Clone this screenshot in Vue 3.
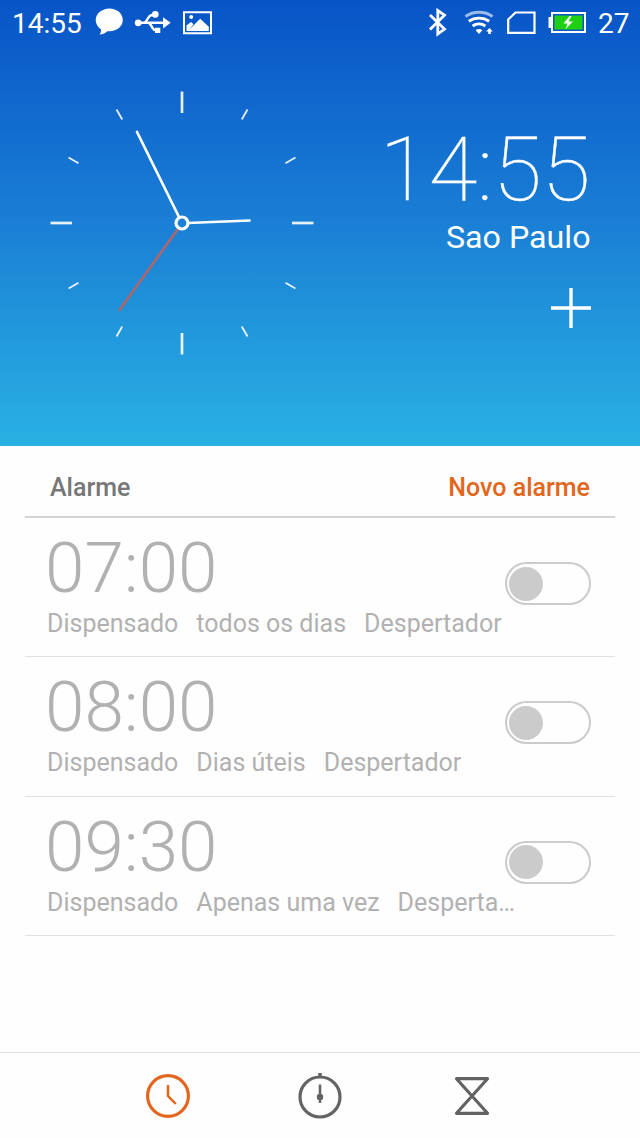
<template>
  <div class="screen">
    <header class="hero">
      <div class="status">
        <span class="status-text status-time">14:55</span>
        <svg class="status-notes" width="120" height="30" viewBox="94 8 120 30">
          <path
            d="M109.500 8.500c7.500 0 13.300 5.100 13.300 11.500s-5.800 11.200-13.300 11.200h-2.300c-1.600 1.900-4.200 3.200-7.700 3.400 1.200-1.400 1.700-3.200 1.500-5.200-3.200-2.200-5.300-5.500-5.300-9.400 0-6.400 6.300-11.500 13.800-11.500z"
            fill="#fff"
          />
          <g fill="none" stroke="#fff" stroke-width="2.400">
            <path d="M138 22.800h27M144 22.500c3.500 0 3.700-7.500 8-7.500h3M148 22.800c3.500 0 3.700 7.300 7.500 7.300h2.500" />
          </g>
          <g fill="#fff">
            <circle cx="138.200" cy="22.800" r="3.400" />
            <circle cx="155.300" cy="14.400" r="3.300" />
            <path d="M155 27.700h5.300v5.300H155zM163 17.200l7.700 5.600-7.700 5.600z" />
          </g>
          <path d="M184 12.200h27v21h-27z" fill="none" stroke="#fff" stroke-width="2" />
          <circle cx="191.200" cy="16.900" r="2" fill="#fff" />
          <path d="M186.500 31v-5.500l4.500-3.500 2.500 2.300-4 5.200 10.700-10.700 8.600 8v4.200z" fill="#fff" />
        </svg>
        <svg class="status-system" width="164" height="30" viewBox="426 8 164 30">
          <path d="M430 15l14.500 14-6.700 5V10.500l6.700 4.700L430 29.500" fill="none" stroke="#fff" stroke-width="2.800" />
          <g fill="none" stroke="#fff" stroke-width="2.900">
            <path d="M465.500 16.500c8-5.600 19-5.600 27 0" opacity="0.6" />
            <path d="M468.800 21.300c6-4.200 14.400-4.200 20.400 0" />
            <path d="M472.600 26c3.800-2.700 9-2.700 12.800 0" />
          </g>
          <path d="M475.600 30.200c2-1.700 4.800-1.700 6.800 0l-3.400 3.900z" fill="#fff" />
          <path d="M489.500 28l3.300 3.500h-2v2.600h-2.600v-2.600h-2.200z" fill="#fff" />
          <path d="M515.500 12.500h19v20.400h-26.300V19.500z" fill="none" stroke="#fff" stroke-width="2.200" />
          <path d="M552 13h33v19h-33z" fill="none" stroke="#fff" stroke-width="2" />
          <path d="M548.500 17h3v11h-3z" fill="#fff" />
          <path d="M554.500 15.500h28v14h-28z" fill="#1fd012" />
          <path d="M569.500 16l-6 7.500h4l-2 5.700 7.300-7.700h-4.300l3-5.500z" fill="#fff" />
        </svg>
        <span class="status-text battery">27</span>
      </div>

      <div class="clock-row">
        <svg class="dial" width="264" height="264" viewBox="-132 -132 264 264">
          <line
            v-for="n in 12"
            :key="n"
            :class="n % 3 ? 'tick' : 'tick major'"
            x1="0"
            x2="0"
            :y1="n % 3 ? -131 : -131.500"
            :y2="n % 3 ? -119.500 : -110"
            :transform="`rotate(${n * 30})`"
          />
          <line class="hand second" x1="-4" y1="6" x2="-62.500" y2="87" />
          <line class="hand" x1="-3" y1="-6" x2="-45" y2="-91" />
          <line class="hand" x1="6" y1="0" x2="67.500" y2="-2.500" />
          <circle class="hub" r="6" />
        </svg>
        <div class="world">
          <div class="world-time">14:55</div>
          <div class="world-city">Sao Paulo</div>
          <svg class="add" width="40" height="40" viewBox="0 0 40 40">
            <path d="M0 20h40M20 0v40" stroke="#fff" stroke-width="3.400" />
          </svg>
        </div>
      </div>
    </header>

    <main class="alarms">
      <div class="alarms-head">
        <span class="heading">Alarme</span>
        <span class="new-alarm">Novo alarme</span>
      </div>
      <div v-for="alarm in alarms" :key="alarm.time" class="alarm">
        <div class="alarm-time">{{ alarm.time }}</div>
        <div class="alarm-meta">
          <span>{{ alarm.state }}</span>
          <span>{{ alarm.repeat }}</span>
          <span class="label">{{ alarm.label }}</span>
        </div>
        <button class="toggle" :class="{ on: alarm.on }" @click="alarm.on = !alarm.on">
          <span class="knob"></span>
        </button>
      </div>
    </main>

    <nav class="tabs">
      <svg class="tab active" width="46" height="46" viewBox="-23 -23 46 46">
        <circle r="20.400" />
        <path d="M0-11V0l7.800 8" stroke-width="2.500" />
      </svg>
      <svg class="tab" width="46" height="48" viewBox="-23 -25 46 48">
        <circle r="20" />
        <path d="M0-24v5" stroke-width="3.500" />
        <path d="M0-12.500V6" stroke-width="2.500" />
        <circle class="dot" r="3.200" />
      </svg>
      <svg class="tab" width="46" height="46" viewBox="-23 -23 46 46">
        <path d="M-15.500-17.300h31L-15.500 17.300h31z" stroke-linejoin="round" />
      </svg>
    </nav>
  </div>
</template>

<script setup>
import { ref } from 'vue'

const alarms = ref([
  { time: '07:00', state: 'Dispensado', repeat: 'todos os dias', label: 'Despertador', on: false },
  { time: '08:00', state: 'Dispensado', repeat: 'Dias úteis', label: 'Despertador', on: false },
  { time: '09:30', state: 'Dispensado', repeat: 'Apenas uma vez', label: 'Despertador', on: false },
])
</script>

<style>
body {
  margin: 0;
  background: #fefefe;
}
</style>

<style scoped>
.screen {
  display: flex;
  flex-direction: column;
  width: 640px;
  height: 1138px;
  overflow: hidden;
  background: #fefefe;
  font-family: Roboto, "Noto Sans", sans-serif;
}

.hero {
  box-sizing: border-box;
  height: 446px;
  background: linear-gradient(#0854c7, #1a7fd5 50%, #29b1e3);
  color: #fff;
}
.status {
  display: flex;
  align-items: center;
  box-sizing: border-box;
  height: 46px;
  padding: 0 11px 0 12px;
}
.status-text {
  font-size: 28px;
  line-height: 46px;
  padding-top: 2px;
}
.status-time {
  width: 82px;
}
.status-system {
  margin-left: auto;
}
.battery {
  width: 31px;
  margin-left: 8px;
}

.clock-row {
  display: flex;
  justify-content: space-between;
  padding: 45px 49.500px 0;
}
.dial {
  display: block;
}
.tick {
  stroke: #fff;
  stroke-width: 1.800;
  opacity: 0.9;
}
.tick.major {
  stroke-width: 2.700;
}
.hand {
  stroke: #fff;
  stroke-width: 2.700;
  stroke-linecap: round;
}
.hand.second {
  stroke: #a9676f;
}
.hub {
  fill: none;
  stroke: #fff;
  stroke-width: 3.200;
}
.world {
  display: flex;
  flex-direction: column;
  align-items: flex-end;
}
.world-time {
  margin-top: 34px;
  font-size: 89px;
  font-weight: 100;
  line-height: 90px;
  white-space: nowrap;
  -webkit-text-stroke: 0.400px #fff;
}
.world-city {
  margin-top: 2px;
  font-size: 32.200px;
  line-height: 40px;
}
.add {
  margin-top: 31px;
}

.alarms {
  padding: 0 25px;
}
.alarms-head {
  display: flex;
  justify-content: space-between;
  box-sizing: border-box;
  height: 72px;
  padding: 7px 25px 0;
  border-bottom: 2px solid #d4d4d4;
  font-size: 25px;
  font-weight: 500;
  line-height: 70px;
}
.heading {
  color: #777;
}
.new-alarm {
  color: #e2661c;
}
.alarm {
  display: grid;
  grid-template-columns: 1fr 86px;
  grid-template-rows: 88px 50px;
  box-sizing: border-box;
  height: 139.300px;
  padding: 0 24.500px 0 22px;
  border-bottom: 1px solid #e2e2e2;
  color: #b1b1b1;
}
.alarm-time {
  grid-area: 1 / 1;
  height: 82px;
  margin-left: -2px;
  padding-top: 6px;
  font-size: 71px;
  font-weight: 300;
  line-height: 88px;
}
.alarm-meta {
  grid-area: 2 / 1 / 3 / 3;
  display: flex;
  gap: 18px;
  width: 472px;
  padding-top: 1px;
  font-size: 25px;
  line-height: 34px;
  white-space: nowrap;
}
.label {
  overflow: hidden;
  text-overflow: ellipsis;
}
.toggle {
  grid-area: 1 / 2 / 3 / 3;
  box-sizing: border-box;
  display: flex;
  align-items: center;
  width: 86px;
  height: 43px;
  margin-top: 44px;
  padding: 0 2px;
  border: 2px solid #cbcbcb;
  border-radius: 22px;
  background: transparent;
  cursor: pointer;
}
.toggle.on {
  justify-content: flex-end;
}
.knob {
  width: 34px;
  height: 34px;
  border-radius: 50%;
  background: #cbcbcb;
}

.tabs {
  display: grid;
  grid-template-columns: repeat(3, 152px);
  justify-content: center;
  justify-items: center;
  align-items: center;
  box-sizing: border-box;
  height: 86px;
  margin-top: auto;
  border-top: 1px solid #e2e2e2;
}
.tab {
  fill: none;
  stroke: #636363;
  stroke-width: 3.200;
}
.tab.active {
  stroke: #e2661c;
}
.dot {
  fill: #636363;
  stroke: none;
}
</style>
